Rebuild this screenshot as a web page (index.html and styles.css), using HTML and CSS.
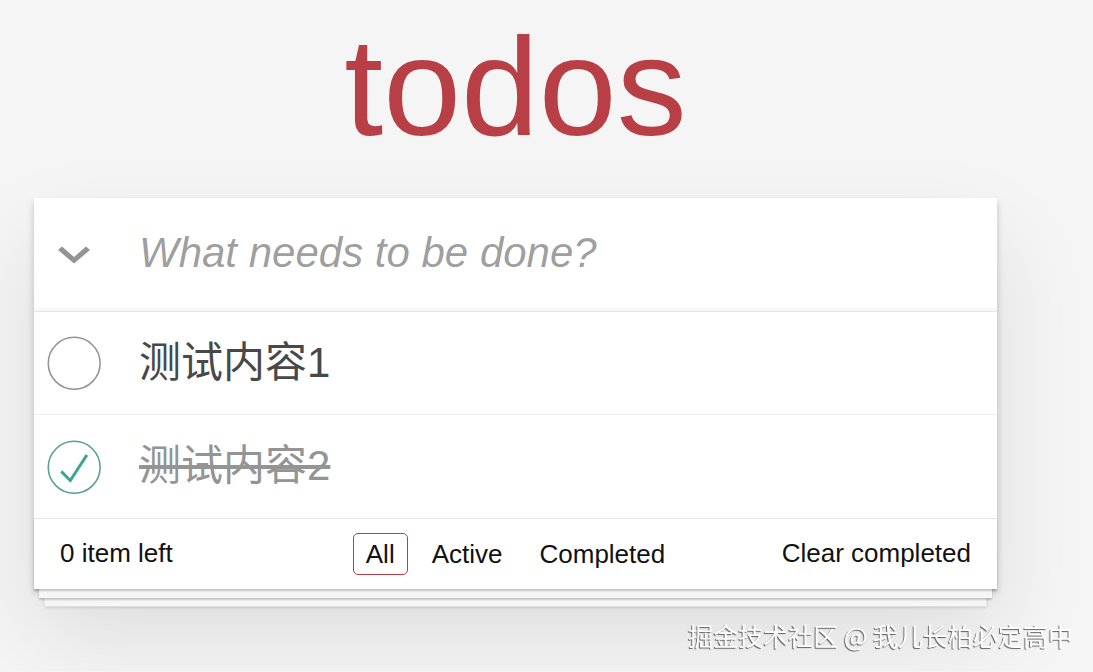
FILE: index.html
```html
<!DOCTYPE html>
<html lang="zh-CN">
<head>
    <meta charset="UTF-8">
    <meta name="viewport" content="width=device-width, initial-scale=1.0">
    <title>Todos</title>
    <link rel="stylesheet" href="styles.css">
</head>
<body>
    <div class="page">
        <h1 class="title">todos</h1>

        <section class="todoapp">
            <header class="header">
                <label class="toggle-all" title="Mark all as complete">
                    <svg width="32" height="19" viewBox="0 0 32 19">
                        <polygon points="0,5 4,1.5 16,12 28,1.5 32,5 16,18.5" fill="#949494"/>
                    </svg>
                </label>
                <input class="new-todo" placeholder="What needs to be done?">
            </header>

            <ul class="todo-list">
                <li class="todo">
                    <span class="toggle">
                        <svg width="70" height="70" viewBox="-10 -18 100 135">
                            <circle cx="50" cy="50" r="50" fill="none" stroke="#949494" stroke-width="3"/>
                        </svg>
                    </span>
                    <label>测试内容1</label>
                </li>
                <li class="todo completed">
                    <span class="toggle">
                        <svg width="70" height="70" viewBox="-10 -18 100 135">
                            <circle cx="50" cy="50" r="50" fill="none" stroke="#59a193" stroke-width="3"/>
                            <path fill="#3ea390" d="M72 25L42 71 27 56l-4 4 20 20 34-52z"/>
                        </svg>
                    </span>
                    <label>测试内容2</label>
                </li>
            </ul>

            <footer class="footer">
                <span class="todo-count">0 item left</span>
                <ul class="filters">
                    <li><a class="selected" href="#/">All</a></li>
                    <li><a href="#/active">Active</a></li>
                    <li><a href="#/completed">Completed</a></li>
                </ul>
                <button class="clear-completed">Clear completed</button>
            </footer>
        </section>
    </div>

    <div class="watermark">掘金技术社区 @ 我儿长柏必定高中</div>
</body>
</html>
```

FILE: styles.css
```css
body {
    margin: 0;
    background: #f5f5f5;
    color: #111;
    font-family: 'Liberation Sans', 'Noto Sans CJK SC', sans-serif;
}

.page {
    width: 963px;
    margin-left: 34px;
    padding-top: 17px;
    padding-bottom: 82px;
}

.title {
    margin: 0 0 41px;
    font-size: 140px;
    line-height: 140px;
    font-weight: 200;
    color: #b83f45;
    text-align: center;
}

.todoapp {
    background: #fff;
    box-shadow: 0 3.5px 7px 0 rgba(0, 0, 0, 0.2),
                0 44px 88px 0 rgba(0, 0, 0, 0.1);
}

.header {
    display: flex;
    align-items: center;
    box-shadow: inset 0 -3.5px 1.75px rgba(0, 0, 0, 0.03);
}

.toggle-all {
    width: 80px;
    display: flex;
    justify-content: center;
    cursor: pointer;
}

.new-todo {
    flex: 1;
    box-sizing: border-box;
    height: 113px;
    margin: 0;
    padding: 26px 28px 30px 25px;
    border: none;
    outline: none;
    background: transparent;
    font-family: inherit;
    font-size: 42px;
    line-height: 1.4em;
    color: #484848;
}

.new-todo::placeholder {
    font-style: italic;
    color: rgba(0, 0, 0, 0.4);
}

.todo-list {
    margin: 0;
    padding: 0;
    list-style: none;
    border-top: 1px solid #e6e6e6;
}

.todo {
    display: flex;
    align-items: center;
    border-bottom: 1px solid #ededed;
}

.todo:last-child {
    border-bottom: none;
}

.toggle {
    display: flex;
    width: 70px;
}

.todo label {
    padding: 26px 26px 26px 35px;
    font-size: 42px;
    line-height: 1.2;
    color: #484848;
}

.todo.completed label {
    color: #949494;
    text-decoration: line-through;
}

.footer {
    display: grid;
    grid-template-columns: 1fr auto 1fr;
    grid-template-rows: 35px;
    align-items: center;
    padding: 17.5px 26px;
    border-top: 1px solid #e6e6e6;
    font-size: 26px;
    line-height: 35px;
    box-shadow: 0 1.75px 1.75px rgba(0, 0, 0, 0.2),
                0 14px 0 -5px #f6f6f6,
                0 15.75px 1.75px -5px rgba(0, 0, 0, 0.2),
                0 28px 0 -10.5px #f6f6f6,
                0 29.75px 3.5px -10.5px rgba(0, 0, 0, 0.2);
}

.todo-count {
    justify-self: start;
}

.filters {
    display: flex;
    margin: -4px 0;
    padding: 0;
    list-style: none;
}

.filters a {
    display: block;
    margin: 0 5.25px;
    padding: 5.25px 12.25px;
    border: 1px solid transparent;
    border-radius: 5px;
    line-height: 30px;
    color: inherit;
    text-decoration: none;
}

.filters a.selected {
    border-color: #b83f45;
}

.clear-completed {
    justify-self: end;
    margin: 0;
    padding: 0;
    border: 0;
    background: none;
    font-family: inherit;
    font-size: 26px;
    line-height: 35px;
    color: inherit;
    cursor: pointer;
}

.watermark {
    position: fixed;
    right: 20px;
    bottom: 19px;
    font-family: 'Noto Sans CJK SC', sans-serif;
    font-size: 25px;
    color: #fff;
    text-shadow: -1px 1px 1px rgba(0, 0, 0, 0.6);
}
```
